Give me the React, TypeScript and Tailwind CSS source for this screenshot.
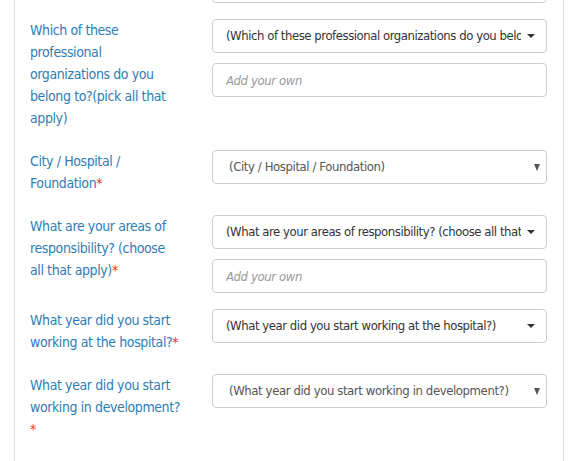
import React from 'react'

const font = { fontFamily: '"DejaVu Sans Condensed", "DejaVu Sans", sans-serif' }

const Label = ({ lines, required }: { lines: string[]; required?: boolean }) => (
  <div className="w-[167px] shrink-0 ml-[15px] pb-[6px] text-[14px] leading-[22px] tracking-[-0.4px] text-[#2f7db5]">
    {lines.map((line, i) => (
      <div key={i} className="whitespace-nowrap">
        {line}
        {required && i === lines.length - 1 && <span className="text-[#ff2a2a]">*</span>}
      </div>
    ))}
  </div>
)

// bootstrap-select style dropdown
const PickerSelect = ({ text }: { text: string }) => (
  <div className="relative h-[34px] w-[335px] rounded-[4px] border border-[#cccccc] bg-white">
    <div className="absolute left-[13px] right-[25px] top-0 h-full overflow-hidden whitespace-nowrap text-[13px] leading-[32px] tracking-[-0.45px] text-[#333333]">
      {text}
    </div>
    <span className="absolute right-[11px] top-[14px] h-0 w-0 border-x-[4px] border-t-[4px] border-x-transparent border-t-[#333333]" />
  </div>
)

// native select
const NativeSelect = ({ text }: { text: string }) => (
  <div className="relative h-[34px] w-[335px] rounded-[4px] border border-[#cccccc] bg-white">
    <div className="absolute left-[16px] right-[30px] top-0 h-full overflow-hidden whitespace-nowrap text-[13px] leading-[32px] tracking-[-0.4px] text-[#555555]">
      {text}
    </div>
    <span className="absolute right-[6px] top-[13px] h-0 w-0 border-x-[3px] border-t-[7px] border-x-transparent border-t-[#555555]" />
  </div>
)

const AddOwn = () => (
  <input
    placeholder="Add your own"
    className="h-[34px] w-[335px] rounded-[4px] border border-[#cccccc] bg-white px-[13px] text-[13px] italic tracking-[-0.4px] text-[#555555] placeholder:text-[#999999] outline-none"
    style={font}
  />
)

const Row = ({ label, children }: { label: React.ReactNode; children: React.ReactNode }) => (
  <div className="mb-[15px] flex items-start">
    {label}
    <div className="ml-[15px] flex shrink-0 flex-col gap-[10px] pb-[1px]">{children}</div>
  </div>
)

export default function App() {
  return (
    <div className="min-h-screen bg-white" style={font}>
      <div className="ml-[14px] min-h-screen w-[550px] overflow-hidden border-x border-[#dddddd]">
        <div className="-mt-[31px] mb-[16px] ml-[197px]">
          <div className="h-[34px] w-[335px] rounded-[4px] border border-[#cccccc] bg-white" />
        </div>
        <Row label={<Label lines={['Which of these', 'professional', 'organizations do you', 'belong to?(pick all that', 'apply)']} />}>
          <PickerSelect text="(Which of these professional organizations do you belong to?(pick all that apply))" />
          <AddOwn />
        </Row>
        <Row label={<Label lines={['City / Hospital /', 'Foundation']} required />}>
          <NativeSelect text="(City / Hospital / Foundation)" />
        </Row>
        <Row label={<Label lines={['What are your areas of', 'responsibility? (choose', 'all that apply)']} required />}>
          <PickerSelect text="(What are your areas of responsibility? (choose all that apply))" />
          <AddOwn />
        </Row>
        <Row label={<Label lines={['What year did you start', 'working at the hospital?']} required />}>
          <PickerSelect text="(What year did you start working at the hospital?)" />
        </Row>
        <Row label={<Label lines={['What year did you start', 'working in development?', '']} required />}>
          <NativeSelect text="(What year did you start working in development?)" />
        </Row>
      </div>
    </div>
  )
}
